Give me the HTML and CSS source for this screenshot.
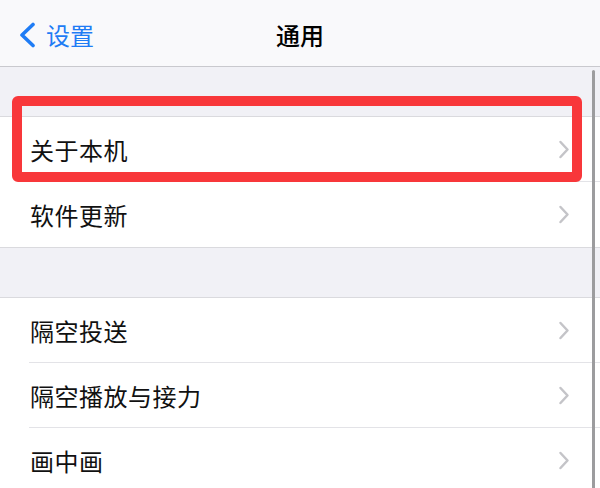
FILE: index.html
```html
<!DOCTYPE html>
<html lang="zh-CN">
<head>
<meta charset="utf-8">
<link rel="stylesheet" href="styles.css">
</head>
<body>
<div class="screen">
  <header class="nav">
    <div class="nav-left">
      <svg class="back-icon" width="18" height="26" viewBox="0 0 18 26"><path d="M15 2.5 L4 13 L15 23.5" fill="none" stroke="#1f7cf5" stroke-width="3.6" stroke-linecap="round" stroke-linejoin="round"/></svg>
      <span class="back-text">设置</span>
    </div>
    <div class="nav-title">通用</div>
    <div class="nav-right"></div>
  </header>

  <section class="group">
    <div class="row"><span class="label">关于本机</span><svg class="chev" width="12" height="19" viewBox="0 0 12 19"><path d="M2.5 2 L9.5 9.5 L2.5 17" fill="none" stroke="#c4c4c8" stroke-width="2.5" stroke-linecap="round" stroke-linejoin="round"/></svg></div>
    <div class="row"><span class="label">软件更新</span><svg class="chev" width="12" height="19" viewBox="0 0 12 19"><path d="M2.5 2 L9.5 9.5 L2.5 17" fill="none" stroke="#c4c4c8" stroke-width="2.5" stroke-linecap="round" stroke-linejoin="round"/></svg></div>
  </section>

  <section class="group">
    <div class="row"><span class="label">隔空投送</span><svg class="chev" width="12" height="19" viewBox="0 0 12 19"><path d="M2.5 2 L9.5 9.5 L2.5 17" fill="none" stroke="#c4c4c8" stroke-width="2.5" stroke-linecap="round" stroke-linejoin="round"/></svg></div>
    <div class="row"><span class="label">隔空播放与接力</span><svg class="chev" width="12" height="19" viewBox="0 0 12 19"><path d="M2.5 2 L9.5 9.5 L2.5 17" fill="none" stroke="#c4c4c8" stroke-width="2.5" stroke-linecap="round" stroke-linejoin="round"/></svg></div>
    <div class="row"><span class="label">画中画</span><svg class="chev" width="12" height="19" viewBox="0 0 12 19"><path d="M2.5 2 L9.5 9.5 L2.5 17" fill="none" stroke="#c4c4c8" stroke-width="2.5" stroke-linecap="round" stroke-linejoin="round"/></svg></div>
  </section>

  <div class="highlight"></div>
  <div class="scrollbar"></div>
</div>
</body>
</html>
```

FILE: styles.css
```css
* { box-sizing: border-box; }
html, body { margin: 0; padding: 0; }
body {
  width: 600px;
  height: 488px;
  overflow: hidden;
  background: #f1f1f6;
  font-family: "Noto Sans CJK SC", "Noto Sans", sans-serif;
}
.screen {
  position: relative;
  width: 600px;
  height: 488px;
  overflow: hidden;
}
.nav {
  height: 67px;
  background: #f9f9fb;
  border-bottom: 1px solid #c9c9ce;
  display: grid;
  grid-template-columns: 1fr auto 1fr;
  align-items: center;
  padding-top: 4px;
}
.nav-left {
  display: flex;
  align-items: center;
  padding-left: 18px;
  gap: 10px;
}
.back-icon { display: block; }
.back-text {
  font-size: 24px;
  color: #1f7cf5;
  line-height: 1;
}
.nav-title {
  font-size: 24px;
  font-weight: 500;
  color: #000;
  line-height: 1;
}
.group {
  margin-top: 49px;
  background: #fff;
  border-top: 1px solid #dadade;
  border-bottom: 1px solid #dadade;
}
.row {
  height: 65px;
  display: flex;
  align-items: center;
  justify-content: space-between;
  padding-left: 30px;
  padding-right: 30px;
  position: relative;
}
.row + .row::before {
  content: "";
  position: absolute;
  left: 29px;
  right: 0;
  top: -1px;
  border-top: 1px solid #e3e3e7;
}
.label {
  font-size: 24px;
  color: #111;
  line-height: 1;
  letter-spacing: 0.5px;
}
.chev { display: block; }
.highlight {
  position: absolute;
  left: 12px;
  top: 96px;
  width: 570px;
  height: 86px;
  border: 10px solid #f8373a;
  border-radius: 6px;
}
.scrollbar {
  position: absolute;
  left: 592px;
  top: 70px;
  width: 3px;
  height: 430px;
  background: #9c9c9e;
  border-radius: 2px;
}
```
